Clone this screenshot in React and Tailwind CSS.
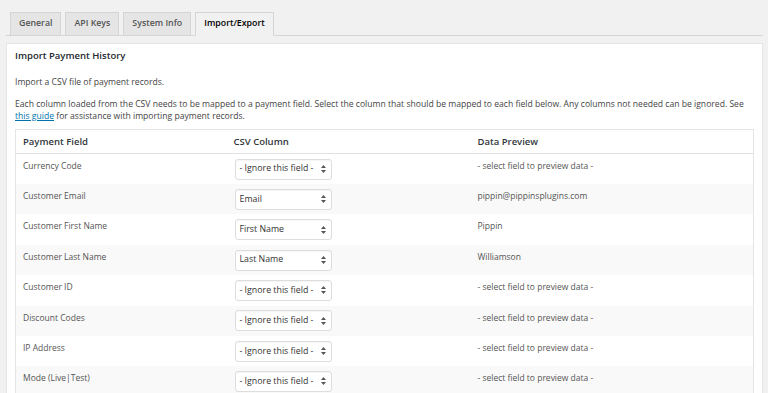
const rows = [
  { field: "Currency Code", csv: "- Ignore this field -", preview: "- select field to preview data -" },
  { field: "Customer Email", csv: "Email", preview: "pippin@pippinsplugins.com" },
  { field: "Customer First Name", csv: "First Name", preview: "Pippin" },
  { field: "Customer Last Name", csv: "Last Name", preview: "Williamson" },
  { field: "Customer ID", csv: "- Ignore this field -", preview: "- select field to preview data -" },
  { field: "Discount Codes", csv: "- Ignore this field -", preview: "- select field to preview data -" },
  { field: "IP Address", csv: "- Ignore this field -", preview: "- select field to preview data -" },
  { field: "Mode (Live|Test)", csv: "- Ignore this field -", preview: "- select field to preview data -" },
];

const tabs = ["General", "API Keys", "System Info", "Import/Export"];

function FakeSelect({ value }) {
  return (
    <div className="flex h-[21px] w-[97px] items-center justify-between rounded-[3px] border border-[#dddddd] bg-white pl-[4px] pr-[5px] text-[8.8px] text-[#333] shadow-[inset_0_1px_1px_rgba(0,0,0,0.04)]">
      <span className="whitespace-nowrap">{value}</span>
      <svg width="5" height="8" viewBox="0 0 5 8">
        <path d="M2.5 0 L5 3 H0 Z" fill="#555" />
        <path d="M2.5 8 L5 5 H0 Z" fill="#555" />
      </svg>
    </div>
  );
}

export default function App() {
  return (
    <div
      className="h-[393px] w-[768px] overflow-hidden bg-[#f1f1f1]"
      style={{ fontFamily: '"Open Sans", sans-serif' }}
    >
      {/* tabs */}
      <div className="ml-[6px] mr-[5px] flex items-end gap-[4px] border-b border-[#d5d5d5] pl-[4px] pt-[12px]">
        {tabs.map((t, i) => {
          const active = i === tabs.length - 1;
          return (
            <div
              key={t}
              className={`-mb-px flex h-[24px] items-center border border-[#d5d5d5] px-[8px] text-[8.8px] font-semibold ${
                active
                  ? "border-b-[#f1f1f1] bg-[#f1f1f1] text-black"
                  : "bg-[#e5e5e5] text-[#555]"
              }`}
            >
              {t}
            </div>
          );
        })}
      </div>

      {/* panel */}
      <div className="ml-[6px] mr-[5px] mt-[7px] border border-[#e5e5e5] bg-white px-[8px] pt-[5px]">
        <h2 className="text-[9.5px] font-semibold text-[#23282d]">Import Payment History</h2>

        <p className="mt-[13px] text-[8.6px] text-[#444]">Import a CSV file of payment records.</p>

        <p className="mt-[9px] pr-[8px] text-[8.6px] leading-[12px] text-[#444]">
          Each column loaded from the CSV needs to be mapped to a payment field. Select the column that should be mapped to each field below. Any columns not needed can be ignored. See{" "}
          <a className="text-[#0073aa] underline">this guide</a> for assistance with importing payment records.
        </p>

        <table className="mt-[7px] w-full border-collapse border border-[#e5e5e5] text-left">
          <thead>
            <tr className="h-[24px] border-b border-[#e1e1e1]">
              <th className="w-[212px] pl-[7px] text-[9.5px] font-semibold text-[#32373c]">Payment Field</th>
              <th className="w-[244px] pl-[6px] text-[9.5px] font-semibold text-[#32373c]">CSV Column</th>
              <th className="pl-[6px] text-[9.5px] font-semibold text-[#32373c]">Data Preview</th>
            </tr>
          </thead>
          <tbody>
            {rows.map((r, i) => (
              <tr key={r.field} className={`h-[30.4px] ${i % 2 === 1 ? "bg-[#f9f9f9]" : "bg-white"}`}>
                <td className="pl-[7px] pt-[6px] align-top text-[8.5px] text-[#555]">{r.field}</td>
                <td className="pl-[7px] align-middle">
                  <FakeSelect value={r.csv} />
                </td>
                <td className="pl-[6px] pt-[6px] align-top text-[8.5px] text-[#555]">{r.preview}</td>
              </tr>
            ))}
          </tbody>
        </table>
        <div className="h-[10px]" />
      </div>
    </div>
  );
}
